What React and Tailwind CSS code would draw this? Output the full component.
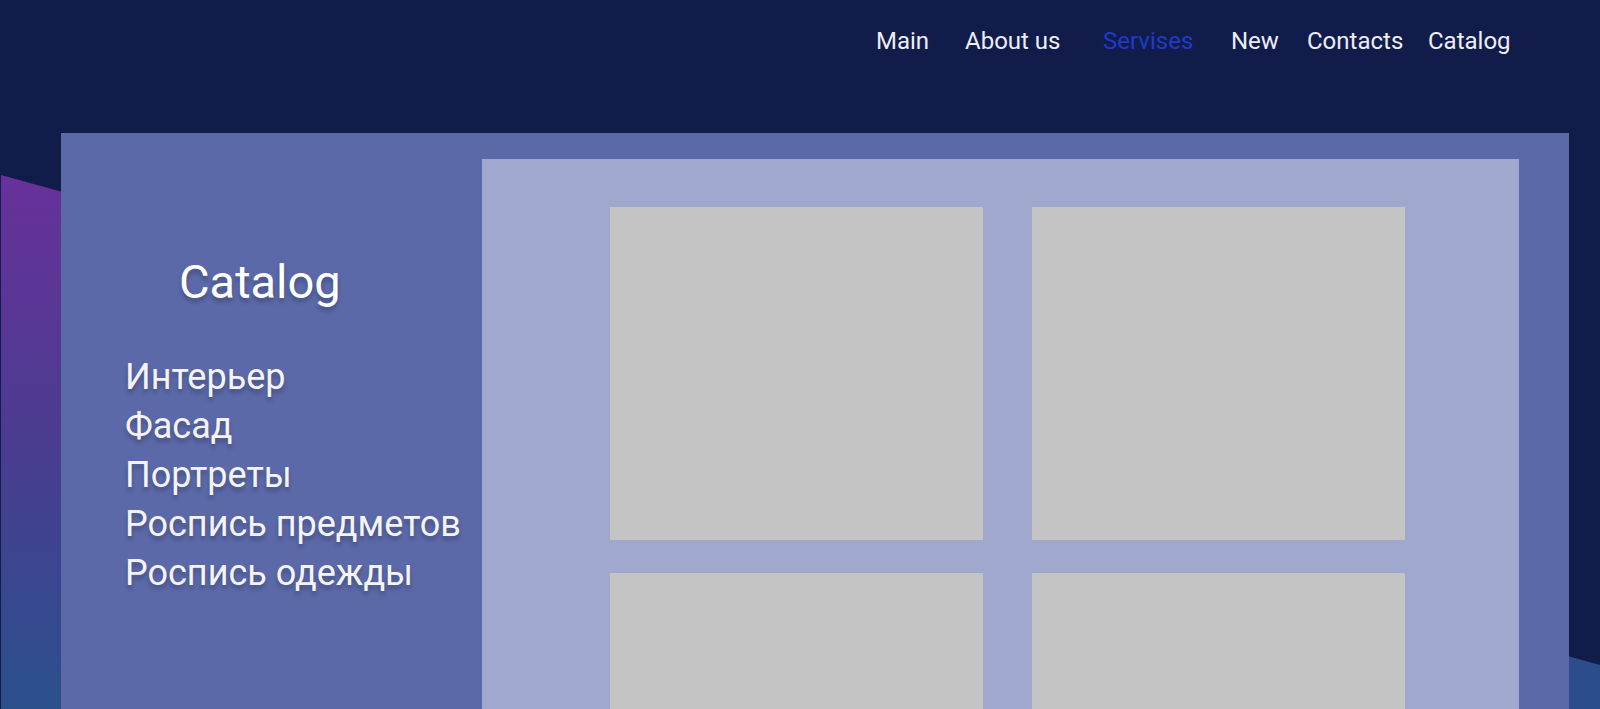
import React from "react";

const navItems = [
  { label: "Main", w: "w-[89px]", active: false },
  { label: "About us", w: "w-[138px]", active: false },
  { label: "Servises", w: "w-[128px]", active: true },
  { label: "New", w: "w-[76px]", active: false },
  { label: "Contacts", w: "w-[121px]", active: false },
  { label: "Catalog", w: "w-[90px]", active: false },
];

const categories = [
  "Интерьер",
  "Фасад",
  "Портреты",
  "Роспись предметов",
  "Роспись одежды",
];

export default function App() {
  return (
    <div
      className="relative h-[709px] w-[1600px] overflow-hidden bg-[#121c4a]"
      style={{ fontFamily: "Roboto, 'Noto Sans', sans-serif" }}
    >
      <svg
        className="absolute left-0 top-0"
        width="1600"
        height="709"
        viewBox="0 0 1600 709"
      >
        <defs>
          <linearGradient id="lg" x1="0" y1="175" x2="0" y2="709" gradientUnits="userSpaceOnUse">
            <stop offset="0" stopColor="#67319b" />
            <stop offset="0.5" stopColor="#4a3c8f" />
            <stop offset="1" stopColor="#2a508c" />
          </linearGradient>
        </defs>
        <polygon points="1,175 200,230 200,709 1,709" fill="url(#lg)" />
        <polygon points="1400,610 1600,665 1600,709 1400,709" fill="#2c4d8c" />
      </svg>

      <header className="relative flex h-[133px] items-start pt-[27px]">
        <nav className="ml-[876px] flex">
          {navItems.map((item) => (
            <div
              key={item.label}
              className={`${item.w} text-[24px] leading-[28px] ${
                item.active ? "text-[#1f3acb]" : "text-[#eceef6]"
              }`}
            >
              {item.label}
            </div>
          ))}
        </nav>
      </header>

      <main className="relative ml-[61px] flex h-[576px] w-[1508px] bg-[#5b69a9]">
        <aside className="w-[421px] shrink-0">
          <h1
            className="ml-[118px] mt-[121px] text-[47px] font-normal leading-[55px] text-white"
            style={{ textShadow: "0 4px 4px rgba(0,0,0,0.25)" }}
          >
            Catalog
          </h1>
          <ul className="ml-[64px] mt-[44px] flex flex-col">
            {categories.map((c) => (
              <li
                key={c}
                className="text-[36px] leading-[49px] text-[#f4f4f8]"
                style={{ textShadow: "0 4px 4px rgba(0,0,0,0.25)" }}
              >
                {c}
              </li>
            ))}
          </ul>
        </aside>
        <section className="mr-[50px] mt-[26px] flex-1 bg-[#a0a8cd] pl-[128px] pt-[48px]">
          <div className="grid grid-cols-[373px_373px] gap-x-[49px] gap-y-[33px]">
            <div className="h-[333px] bg-[#c4c4c4]" />
            <div className="h-[333px] bg-[#c4c4c4]" />
            <div className="h-[333px] bg-[#c4c4c4]" />
            <div className="h-[333px] bg-[#c4c4c4]" />
          </div>
        </section>
      </main>
    </div>
  );
}
